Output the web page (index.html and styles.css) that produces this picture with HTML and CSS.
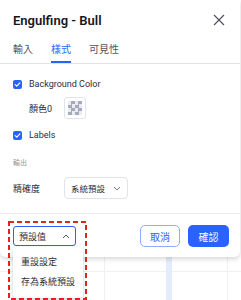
FILE: index.html
```html
<!DOCTYPE html>
<html>
<head>
<meta charset="utf-8">
<link rel="stylesheet" href="styles.css">
</head>
<body>
<div class="chart"><div class="bar"></div></div>
<div class="dialog">
  <div class="header">
    <span class="title">Engulfing - Bull</span>
    <svg class="close" width="12" height="12" viewBox="0 0 12 12"><path d="M1 1L11 11M11 1L1 11" stroke="#50535e" stroke-width="1.2" fill="none"/></svg>
  </div>
  <div class="tabs">
    <span class="tab">輸入</span>
    <span class="tab active">樣式</span>
    <span class="tab">可見性</span>
  </div>
  <div class="content">
    <div class="check-row">
      <span class="cb"><svg width="9" height="9" viewBox="0 0 9 9"><path d="M2.2 4.6L3.8 6.1L6.9 2.9" stroke="#fff" stroke-width="1.2" fill="none" stroke-linecap="round" stroke-linejoin="round"/></svg></span>
      <span class="label">Background Color</span>
    </div>
    <div class="color-row">
      <span class="color-label">顏色0</span>
      <span class="swatch"><span class="checker"></span></span>
    </div>
    <div class="check-row second">
      <span class="cb"><svg width="9" height="9" viewBox="0 0 9 9"><path d="M2.2 4.6L3.8 6.1L6.9 2.9" stroke="#fff" stroke-width="1.2" fill="none" stroke-linecap="round" stroke-linejoin="round"/></svg></span>
      <span class="label">Labels</span>
    </div>
    <div class="section">輸出</div>
    <div class="select-row">
      <span class="row-label">精確度</span>
      <div class="select">
        <span>系統預設</span>
        <svg width="8" height="5" viewBox="0 0 8 5"><path d="M1 1L4 4L7 1" stroke="#787b86" stroke-width="1" fill="none"/></svg>
      </div>
    </div>
  </div>
  <div class="footer">
    <div class="preset">
      <span>預設值</span>
      <svg width="8" height="5" viewBox="0 0 8 5"><path d="M1 4L4 1L7 4" stroke="#50535e" stroke-width="1" fill="none"/></svg>
    </div>
    <div class="spacer"></div>
    <button class="btn cancel">取消</button>
    <button class="btn ok">確認</button>
  </div>
</div>
<div class="menu">
  <div class="item">重設設定</div>
  <div class="item">存為系統預設</div>
</div>
<svg class="highlight" width="79" height="79" viewBox="0 0 79 79"><rect x="1" y="1" width="77" height="77" fill="none" stroke="#ee1c25" stroke-width="2" stroke-dasharray="5 3"/></svg>
</body>
</html>
```
FILE: styles.css
```css
html, body {
  margin: 0;
  padding: 0;
}
body {
  width: 241px;
  height: 300px;
  overflow: hidden;
  position: relative;
  background: #fff;
  font-family: Roboto, "Noto Sans CJK TC", sans-serif;
  color: #131722;
}
.chart {
  position: absolute;
  left: 0;
  top: 0;
  width: 241px;
  height: 300px;
  background:
    linear-gradient(to right, transparent 104px, #eef0f4 104px, #eef0f4 105px, transparent 105px),
    linear-gradient(to right, transparent 227px, #eef0f4 227px, #eef0f4 228px, transparent 228px),
    linear-gradient(to bottom, transparent 271px, #eef0f4 271px, #eef0f4 272px, transparent 272px);
}
.bar {
  position: absolute;
  left: 166px;
  top: 250px;
  width: 6px;
  height: 50px;
  background: #e4ebfc;
}
.dialog {
  position: relative;
  z-index: 1;
  width: 240px;
  background: #fff;
  border-radius: 0 0 6px 6px;
  box-shadow: 0 2px 5px rgba(0, 0, 0, 0.16);
}
.header {
  height: 40px;
  display: flex;
  align-items: center;
  justify-content: space-between;
  padding: 0 14px 0 13px;
}
.title {
  font-size: 13px;
  font-weight: 600;
  color: #131722;
}
.close {
  display: block;
  margin-right: 1px;
}
.tabs {
  display: flex;
  gap: 18px;
  padding: 0 13px;
  border-bottom: 1px solid #e0e3eb;
}
.tab {
  font-size: 10px;
  line-height: 14px;
  padding: 3px 0 4px;
  border-bottom: 2px solid transparent;
  color: #50535e;
}
.tab.active {
  color: #2962ff;
  border-bottom-color: #2962ff;
}
.content {
  padding: 10px 13px 14px;
  display: flex;
  flex-direction: column;
}
.check-row {
  height: 20px;
  display: flex;
  align-items: center;
  gap: 7px;
}
.check-row.second {
  margin-top: 6px;
}
.cb {
  width: 9px;
  height: 9px;
  border-radius: 2px;
  background: #2962ff;
  display: flex;
}
.label {
  font-size: 9px;
  color: #2a2e39;
}
.color-row {
  margin-top: 3px;
  height: 22px;
  display: flex;
  align-items: center;
  padding-left: 16px;
}
.color-label {
  width: 35px;
  font-size: 9px;
  color: #2a2e39;
}
.swatch {
  width: 20px;
  height: 20px;
  border: 1px solid #e0e3eb;
  border-radius: 3px;
  display: flex;
  align-items: center;
  justify-content: center;
}
.checker {
  width: 14px;
  height: 14px;
  background: conic-gradient(#a6aabb 25%, #e9ebf2 0 50%, #a6aabb 0 75%, #e9ebf2 0) 0 0 / 7px 7px;
}
.section {
  margin-top: 11px;
  font-size: 7px;
  line-height: 14px;
  color: #9598a1;
}
.select-row {
  margin-top: 7px;
  height: 22px;
  display: flex;
  align-items: center;
}
.row-label {
  width: 51px;
  font-size: 9px;
  color: #2a2e39;
}
.select {
  box-sizing: border-box;
  width: 64px;
  height: 22px;
  border: 1px solid #e0e3eb;
  border-radius: 4px;
  display: flex;
  align-items: center;
  justify-content: space-between;
  padding: 0 6px 0 6px;
  font-size: 8.5px;
  color: #2a2e39;
}
.footer {
  border-top: 1px solid #e8eaef;
  display: flex;
  align-items: center;
  padding: 11px 11px 10px 13px;
}
.preset {
  box-sizing: border-box;
  width: 63px;
  height: 20px;
  border: 1px solid #2962ff;
  border-radius: 3px;
  display: flex;
  align-items: center;
  justify-content: space-between;
  padding: 0 5px;
  font-size: 9px;
  color: #2a2e39;
}
.spacer {
  flex: 1;
}
.btn {
  box-sizing: border-box;
  height: 22px;
  width: 41px;
  border-radius: 5px;
  font-family: Roboto, "Noto Sans CJK TC", sans-serif;
  font-size: 10px;
  padding: 0;
}
.cancel {
  width: 40px;
  background: #fff;
  border: 1px solid #91acfb;
  color: #2962ff;
  margin-right: 8px;
}
.ok {
  background: #2962ff;
  border: none;
  color: #fff;
}
.menu {
  position: absolute;
  z-index: 2;
  left: 13px;
  top: 247px;
  width: 70px;
  padding: 5px 0 6px;
  background: #fff;
  border-radius: 0 0 4px 4px;
  box-shadow: 0 2px 5px rgba(0, 0, 0, 0.18);
}
.item {
  height: 20px;
  line-height: 20px;
  padding-left: 8px;
  font-size: 9px;
  color: #2a2e39;
}
.highlight {
  position: absolute;
  z-index: 3;
  left: 8px;
  top: 221px;
}
```
